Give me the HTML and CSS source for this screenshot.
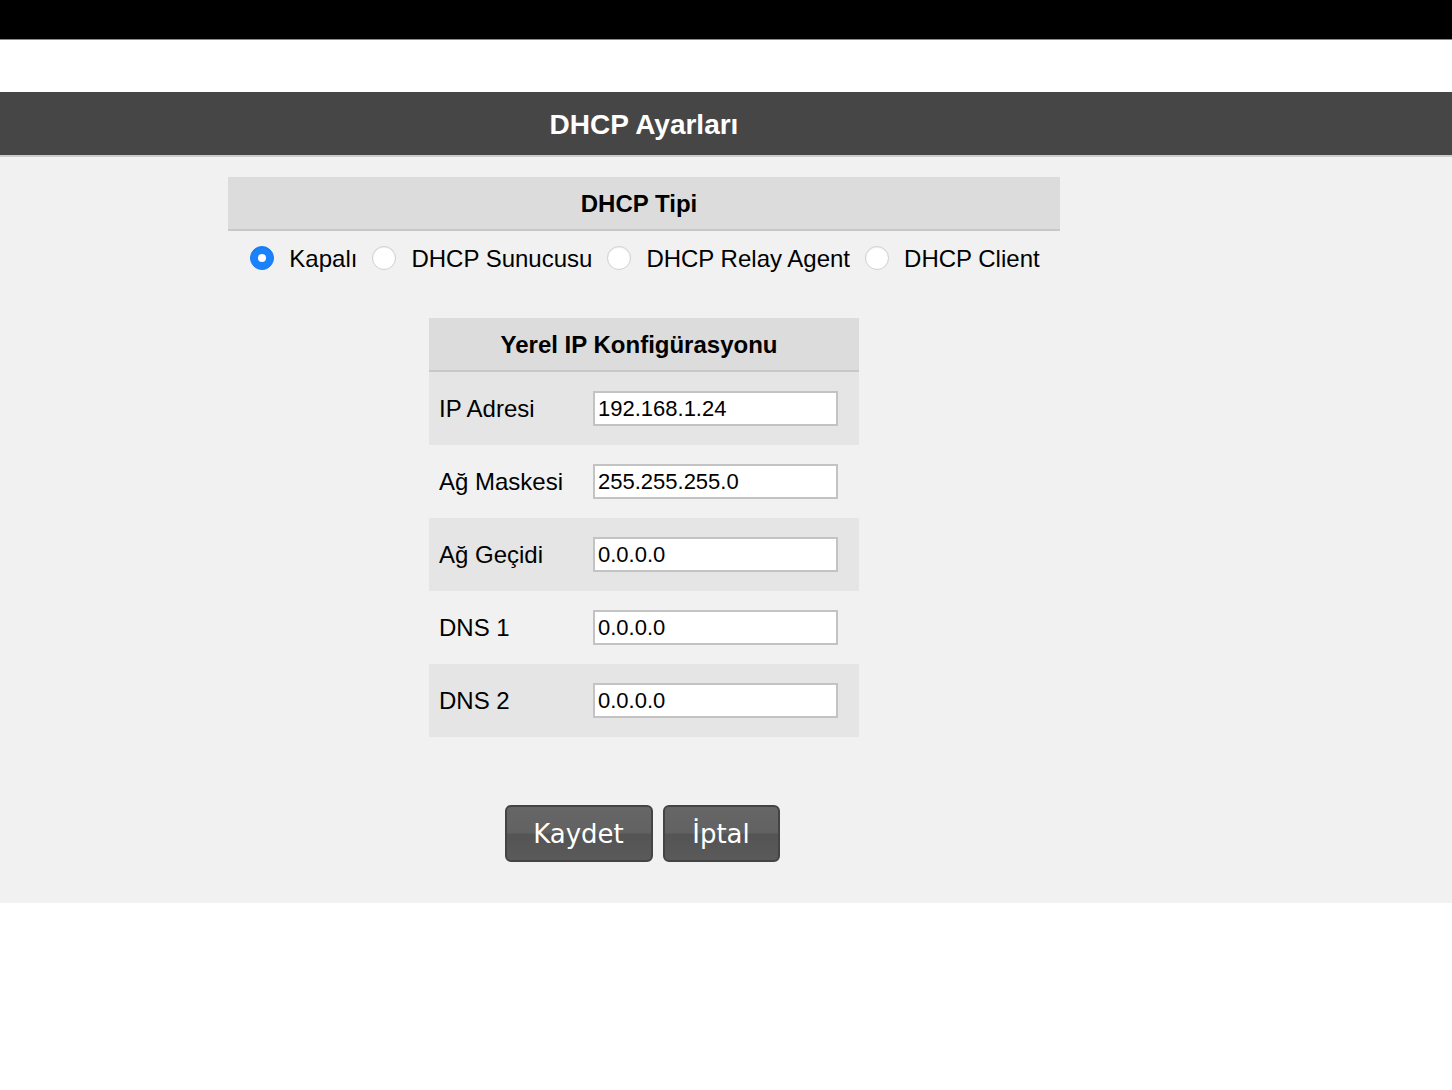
FILE: index.html
```html
<!DOCTYPE html>
<html lang="tr">
<head>
<meta charset="utf-8">
<title>DHCP Ayarları</title>
<link rel="stylesheet" href="styles.css">
</head>
<body>
<div class="topbar"></div>
<div class="spacer"></div>
<div class="titlebar">
  <div class="wrap"><h1 class="title">DHCP Ayarları</h1></div>
</div>
<main class="main">
  <div class="wrap">
    <section class="type">
      <div class="section-head">DHCP Tipi</div>
      <div class="radios">
        <label class="opt"><input type="radio" name="dt" class="radio" checked><span>Kapalı</span></label>
        <label class="opt"><input type="radio" name="dt" class="radio"><span>DHCP Sunucusu</span></label>
        <label class="opt"><input type="radio" name="dt" class="radio"><span>DHCP Relay Agent</span></label>
        <label class="opt"><input type="radio" name="dt" class="radio"><span>DHCP Client</span></label>
      </div>
    </section>
    <section class="config">
      <div class="section-head">Yerel IP Konfigürasyonu</div>
      <div class="row alt"><span class="lbl">IP Adresi</span><input class="field" type="text" value="192.168.1.24"></div>
      <div class="row"><span class="lbl">Ağ Maskesi</span><input class="field" type="text" value="255.255.255.0"></div>
      <div class="row alt"><span class="lbl">Ağ Geçidi</span><input class="field" type="text" value="0.0.0.0"></div>
      <div class="row"><span class="lbl">DNS 1</span><input class="field" type="text" value="0.0.0.0"></div>
      <div class="row alt"><span class="lbl">DNS 2</span><input class="field" type="text" value="0.0.0.0"></div>
    </section>
    <div class="actions">
      <button class="btn btn-save" type="button">Kaydet</button>
      <button class="btn btn-cancel" type="button">İptal</button>
    </div>
  </div>
</main>
</body>
</html>
```
FILE: styles.css
```css
* { box-sizing: border-box; }
html, body { margin: 0; padding: 0; background: #ffffff; }
body { font-family: "Liberation Sans", Arial, sans-serif; color: #000; }

.topbar { height: 40px; background: #000; border-bottom: 1px solid #8a8a8a; }
.spacer { height: 52px; background: #fff; }

.wrap { margin-left: 228px; width: 832px; }

.titlebar { height: 65px; background: #464646; border-bottom: 2px solid #cccccc; }
.title { margin: 0; height: 63px; line-height: 66px; text-align: center; color: #fff; font-size: 28px; font-weight: bold; }

.main { background: #f1f1f1; padding: 20px 0 41px; }

.section-head { height: 54px; background: #dcdcdc; border-bottom: 2px solid #c8c8c8; text-align: center; font-weight: bold; font-size: 24px; line-height: 54px; padding-right: 10px; }

.radios { display: flex; justify-content: center; align-items: center; height: 56px; padding-left: 2px; }
.opt { display: flex; align-items: center; font-size: 24px; margin-right: 15px; }
.opt:last-child { margin-right: 0; }
.opt span { margin-left: 15px; line-height: 28px; }
.radio { appearance: none; -webkit-appearance: none; margin: 0; width: 24px; height: 24px; border-radius: 50%; background: #fff; border: 1px solid #cfcfcf; box-shadow: inset 0 1px 1px rgba(0,0,0,0.06); position: relative; top: -1px; }
.radio:checked { background: #1a82fb; border-color: #1a7cf0; }
.radio:checked::after { content: ""; position: absolute; left: 7px; top: 7px; width: 8px; height: 8px; border-radius: 50%; background: #fff; }

.config { width: 430px; margin: 31px auto 0; }
.row { display: flex; align-items: center; height: 73px; padding-left: 10px; }
.row.alt { background: #e5e5e5; }
.lbl { width: 154px; font-size: 24px; }
.field { width: 245px; height: 35px; border: 2px solid #c3c3c3; background: #fff; font-family: "Liberation Sans", Arial, sans-serif; font-size: 22px; padding: 0 3px; color: #000; margin-top: 0; }

.actions { display: flex; justify-content: center; gap: 10px; margin-top: 68px; padding-right: 4px; }
.btn { height: 57px; border: 2px solid #444; border-radius: 6px; background: linear-gradient(#666 0%, #626262 48%, #545454 52%, #5a5a5a 100%); color: #fff; font-family: "DejaVu Sans", Verdana, sans-serif; font-size: 26px; padding: 0; }
.btn-save { width: 148px; }
.btn-cancel { width: 117px; }
```
